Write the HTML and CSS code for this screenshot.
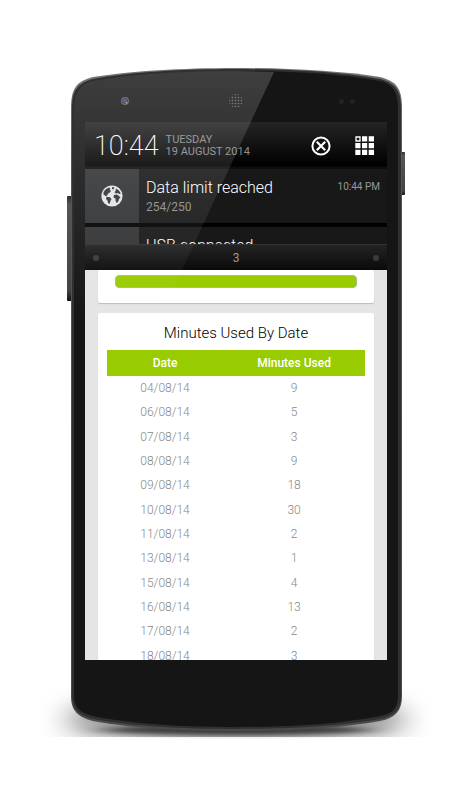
FILE: index.html
```html
<!DOCTYPE html>
<html lang="en">
<head>
    <meta charset="UTF-8">
    <meta name="viewport" content="width=device-width, initial-scale=1.0">
    <title>Minutes Used By Date</title>
    <link rel="stylesheet" href="styles.css">
</head>
<body>
    <main class="phone">
        <!-- Phone body -->
        <svg class="phone-body" viewBox="0 0 331 663" preserveAspectRatio="none" aria-hidden="true">
            <defs>
                <linearGradient id="rim" x1="0" y1="0" x2="0" y2="1">
                    <stop offset="0" stop-color="#747474"/>
                    <stop offset="0.15" stop-color="#555"/>
                    <stop offset="1" stop-color="#4a4a4a"/>
                </linearGradient>
                <linearGradient id="key" x1="0" y1="0" x2="0" y2="1">
                    <stop offset="0" stop-color="#2c2c2c"/>
                    <stop offset="0.08" stop-color="#555"/>
                    <stop offset="0.9" stop-color="#444"/>
                    <stop offset="1" stop-color="#111"/>
                </linearGradient>
                <filter id="blurWide" x="-20%" y="-100%" width="140%" height="300%">
                    <feGaussianBlur stdDeviation="14 12"/>
                </filter>
                <filter id="blurTight" x="-20%" y="-200%" width="140%" height="500%">
                    <feGaussianBlur stdDeviation="14 2"/>
                </filter>
                <clipPath id="floor">
                    <rect x="-60" y="560" width="450" height="109"/>
                </clipPath>
            </defs>
            <g clip-path="url(#floor)">
                <ellipse cx="165" cy="652" rx="172" ry="22" fill="#000" opacity="0.5" filter="url(#blurWide)"/>
            </g>
            <ellipse cx="165" cy="662" rx="135" ry="5" fill="#000" opacity="0.6" filter="url(#blurTight)"/>
            <rect x="-4" y="128" width="6" height="105" rx="1" fill="url(#key)"/>
            <rect x="329" y="84" width="5" height="43" rx="1" fill="url(#key)"/>
            <path d="M0 40C0 20 6 13 22 9C60 3 110 0 165 0C220 0 270 3 309 9C325 13 331 20 331 40V628C331 643 324 650 309 653C270 660 220 663 165 663C110 663 60 660 22 653C7 649 0 643 0 628Z" fill="url(#rim)"/>
            <path d="M1 40C1 21 8 15 22 11C60 4 110 1 165 1C220 1 270 4 309 11C323 15 330 21 330 40V628C330 642 323 648 309 651C270 658 220 661 165 661C110 661 60 658 22 651C8 647 1 642 1 628Z" fill="#303030"/>
            <path d="M3 40C3 23 10 16 22 13C60 6 110 3 165 3C220 3 270 6 309 13C321 16 327 23 327 40V628C327 640 321 646 309 648C270 656 220 659 165 659C110 659 60 656 22 648C10 645 3 640 3 628Z" fill="#151515"/>
        </svg>

        <!-- Camera, earpiece and sensors -->
        <div class="bezel">
            <svg class="camera" viewBox="0 0 8 8" aria-hidden="true">
                <circle cx="4" cy="4" r="4" fill="#5a5a5a"/>
                <circle cx="4" cy="4" r="2.8" fill="#2c2c44"/>
                <circle cx="3.6" cy="3.6" r="1.4" fill="#4a4ad8"/>
                <circle cx="5.4" cy="5.6" r="0.9" fill="#aaa"/>
            </svg>
            <svg class="earpiece" viewBox="0 0 16 16" aria-hidden="true">
                <defs>
                    <pattern id="mesh" width="3" height="3" patternUnits="userSpaceOnUse">
                        <rect width="3" height="3" fill="#151515"/>
                        <circle cx="1.500" cy="1.500" r="0.8" fill="#666"/>
                    </pattern>
                </defs>
                <circle cx="8" cy="8" r="8" fill="#121212"/>
                <circle cx="8" cy="8" r="7" fill="url(#mesh)"/>
            </svg>
            <span class="sensors"><i></i><i></i></span>
        </div>

        <div class="screen">
            <section class="shade">
                <header class="shade-header">
                    <time class="clock">10:44</time>
                    <div class="day">
                        <span>TUESDAY</span>
                        <span>19 AUGUST 2014</span>
                    </div>
                    <button class="icon-button clear" type="button" aria-label="Clear all">
                        <svg width="20" height="20" viewBox="0 0 20 20">
                            <circle cx="10" cy="10" r="8.6" fill="none" stroke="#fff" stroke-width="2"/>
                            <path d="M5.800 5.800L14.200 14.200M14.200 5.800L5.800 14.200" stroke="#fff" stroke-width="2.2"/>
                        </svg>
                    </button>
                    <button class="icon-button" type="button" aria-label="Quick settings">
                        <svg width="20" height="20" viewBox="0 0 20 20" fill="#fff">
                            <path d="M1 1h4v4h-4z" fill="none" stroke="#fff" stroke-width="1.3"/>
                            <path d="M7 0.3h5.2v5.2h-5.2zM13.7 0.3h5.3v5.2h-5.3zM0.3 7h5.2v5.2h-5.2zM7 7h5.2v5.2h-5.2zM13.7 7h5.3v5.2h-5.3zM0.3 13.7h5.2v5.3h-5.2zM7 13.7h5.2v5.3h-5.2zM13.7 13.7h5.3v5.3h-5.3z"/>
                        </svg>
                    </button>
                </header>

                <article class="notification">
                    <div class="notification-icon">
                        <svg width="22" height="22" viewBox="0 0 22 22">
                            <circle cx="11" cy="11" r="10.6" fill="#e4e4e4"/>
                            <path d="M2.500 7L5 4L8 2.500L9.500 3.500L8.500 5L10 5.500L9 7.500L7.500 8L7 9.500L5.500 10L6.500 11.500L4.500 11L2.500 9.500Z" fill="#333536"/>
                            <path d="M5.500 12L8.500 12L10.500 14L9.500 16L8.500 19L7 18L6.500 15.500L5 14Z" fill="#333536"/>
                            <path d="M11 2L13.500 2.500L12.500 4.500L11 4Z" fill="#333536"/>
                            <path d="M15 3.500L18 5.500L19.800 8.500L18.500 9L16.500 8L15 8.500L13.500 7.500L14.500 6Z" fill="#333536"/>
                            <path d="M13 10L16 9.500L18 11L19.500 12.500L18 14L17 17L15.500 18L14.500 15.500L14.500 13.500L12.500 12.500Z" fill="#333536"/>
                        </svg>
                    </div>
                    <div class="notification-text">
                        <h2>Data limit reached</h2>
                        <p>254/250</p>
                    </div>
                    <time class="notification-time">10:44 PM</time>
                </article>

                <article class="notification clipped">
                    <div class="notification-icon"></div>
                    <div class="notification-text">
                        <h2>USB connected</h2>
                    </div>
                </article>

                <footer class="handle">
                    <i></i>
                    <span>3</span>
                    <i></i>
                </footer>
            </section>

            <section class="app">
                <div class="card usage">
                    <div class="usage-bar"></div>
                </div>

                <div class="card">
                    <h1>Minutes Used By Date</h1>
                    <table>
                        <thead>
                            <tr><th scope="col">Date</th><th scope="col">Minutes Used</th></tr>
                        </thead>
                        <tbody>
                            <tr><td>04/08/14</td><td>9</td></tr>
                            <tr><td>06/08/14</td><td>5</td></tr>
                            <tr><td>07/08/14</td><td>3</td></tr>
                            <tr><td>08/08/14</td><td>9</td></tr>
                            <tr><td>09/08/14</td><td>18</td></tr>
                            <tr><td>10/08/14</td><td>30</td></tr>
                            <tr><td>11/08/14</td><td>2</td></tr>
                            <tr><td>13/08/14</td><td>1</td></tr>
                            <tr><td>15/08/14</td><td>4</td></tr>
                            <tr><td>16/08/14</td><td>13</td></tr>
                            <tr><td>17/08/14</td><td>2</td></tr>
                            <tr><td>18/08/14</td><td>3</td></tr>
                        </tbody>
                    </table>
                </div>
            </section>
        </div>

        <!-- Glass reflection -->
        <svg class="glare" viewBox="0 0 331 663" preserveAspectRatio="none" aria-hidden="true">
            <defs>
                <linearGradient id="shine" gradientUnits="userSpaceOnUse" x1="0" y1="0" x2="0" y2="260">
                    <stop offset="0" stop-color="#fff" stop-opacity="0.18"/>
                    <stop offset="0.3" stop-color="#fff" stop-opacity="0.12"/>
                    <stop offset="1" stop-color="#fff" stop-opacity="0"/>
                </linearGradient>
            </defs>
            <path d="M3 40C3 23 10 16 22 13C60 6 110 3 165 3L203 4L84 260H3Z" fill="url(#shine)"/>
        </svg>
    </main>
</body>
</html>
```
FILE: styles.css
```css
* {
    margin: 0;
    padding: 0;
    box-sizing: border-box;
}

body {
    font-family: Roboto, "Liberation Sans", sans-serif;
    background-color: #fff;
    min-height: 100vh;
    padding: 68px 71px;
}

/* Phone */
.phone {
    position: relative;
    max-width: 420px;
    margin: 0 auto;
    padding: 0 15px 71px 14px;
}

.phone-body,
.glare {
    position: absolute;
    top: 0;
    left: 0;
    width: 100%;
    height: 100%;
    overflow: visible;
    pointer-events: none;
}

.bezel {
    position: relative;
    display: grid;
    grid-template-columns: 1fr 16px 1fr;
    align-items: center;
    height: 54px;
    padding-top: 12px;
}

.camera {
    width: 8px;
    height: 8px;
    margin-left: 36px;
}

.earpiece {
    width: 16px;
    height: 16px;
}

.sensors {
    display: flex;
    align-items: center;
    justify-content: flex-end;
    gap: 6px;
    padding-right: 32px;
}

.sensors i {
    width: 5px;
    height: 5px;
    border-radius: 50%;
    background-color: #242222;
}

.screen {
    position: relative;
    display: flex;
    flex-direction: column;
    aspect-ratio: 302 / 538;
    overflow: hidden;
    background-color: #e5e5e5;
}

/* Notification shade */
.shade {
    flex: none;
    background-color: #000;
}

.shade-header {
    display: flex;
    align-items: center;
    height: 47px;
    padding: 0 12px 0 9px;
    background: linear-gradient(#242424, #000 44px, #0c0c0c 45px);
}

.clock {
    font-size: 27px;
    font-weight: 200;
    color: #fff;
}

.day {
    display: flex;
    flex-direction: column;
    flex: 1;
    margin-left: 7px;
    font-size: 11px;
    line-height: 12px;
    color: #8c8c8c;
    white-space: nowrap;
}

.icon-button {
    display: flex;
    border: none;
    background: none;
    cursor: pointer;
}

.clear {
    margin-right: 24px;
}

.notification {
    display: flex;
    height: 54px;
    background-color: #181818;
}

.clipped {
    height: 17px;
    margin-top: 4px;
    overflow: hidden;
}

.notification-icon {
    display: flex;
    flex: none;
    align-items: center;
    justify-content: center;
    width: 54px;
    background-color: #313335;
}

.notification-text {
    flex: 1;
    padding: 9px 0 0 7px;
}

.notification-text h2 {
    font-size: 16px;
    font-weight: 300;
    line-height: 20px;
    color: #fff;
    white-space: nowrap;
}

.notification-text p {
    font-size: 12px;
    line-height: 18px;
    color: #8c8c8c;
}

.notification-time {
    padding: 11px 7px 0 0;
    font-size: 10px;
    line-height: 14px;
    color: #999;
}

.handle {
    display: flex;
    align-items: center;
    justify-content: space-between;
    height: 26px;
    padding: 0 8px;
    border-top: 1px solid #333;
    background: linear-gradient(#232323, #0a0a0a);
    font-size: 12px;
    line-height: 16px;
    color: #999;
}

.handle i {
    width: 6px;
    height: 6px;
    border-radius: 50%;
    background-color: #3a3a3c;
}

/* App content */
.app {
    flex: 1;
    min-height: 0;
    padding: 0 13px;
    overflow: hidden;
}

.card {
    padding: 9px;
    border-radius: 2px;
    background-color: #fff;
    box-shadow: 0 1px 1px #bbb;
}

.usage {
    height: 33px;
    margin-bottom: 10px;
    padding: 5px 17px;
}

.usage-bar {
    height: 13px;
    border: 1px solid #a9bd80;
    border-radius: 4px;
    background-color: #9c0;
}

h1 {
    padding-bottom: 6px;
    font-size: 15px;
    font-weight: 300;
    line-height: 22px;
    color: #000;
    text-align: center;
}

table {
    width: 100%;
    table-layout: fixed;
    border-collapse: collapse;
    font-size: 12px;
    text-align: center;
}

th {
    height: 26px;
    background-color: #9c0;
    font-weight: 500;
    color: #fff;
}

th:first-child {
    width: 45%;
}

td {
    height: 24px;
    font-weight: 300;
    color: #888;
}

tr:nth-child(3n) td {
    height: 25px;
}
```
